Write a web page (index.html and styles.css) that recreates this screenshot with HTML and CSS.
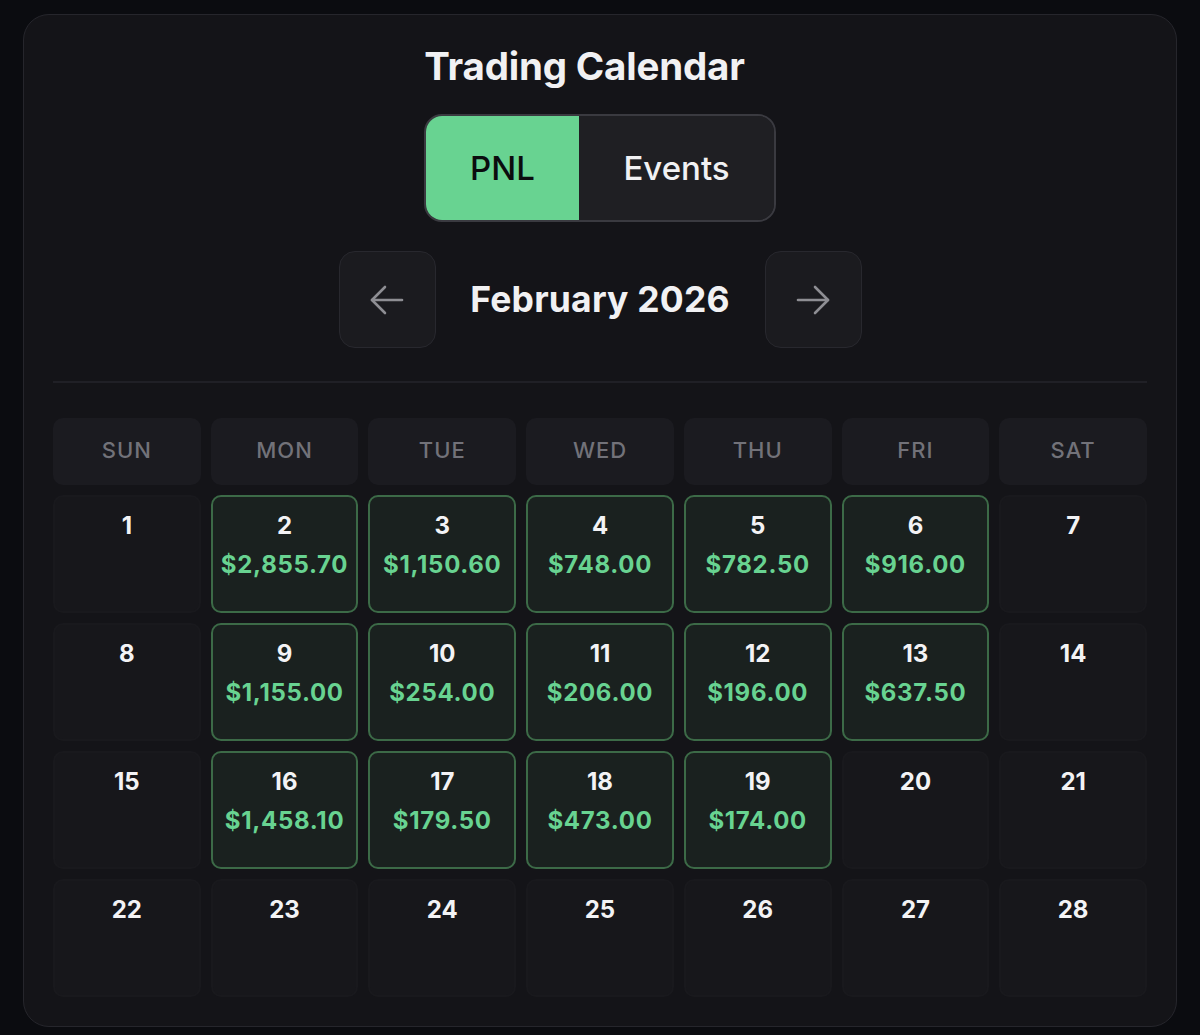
FILE: index.html
```html
<!DOCTYPE html>
<html lang="en">
<head>
<meta charset="utf-8">
<title>Trading Calendar</title>
<link rel="stylesheet" href="styles.css">
</head>
<body>
<div class="card">
  <h1 class="title">Trading Calendar</h1>
  <div class="toggle">
    <button class="seg seg-pnl active">PNL</button>
    <button class="seg seg-events">Events</button>
  </div>
  <div class="nav">
    <button class="nav-btn" aria-label="Previous month">
      <svg width="36" height="32" viewBox="0 0 36 32" fill="none" stroke="currentColor" stroke-width="2.6" stroke-linecap="round" stroke-linejoin="round"><path d="M33 16H3"/><path d="M16 3L3 16l13 13"/></svg>
    </button>
    <div class="month">February 2026</div>
    <button class="nav-btn" aria-label="Next month">
      <svg width="36" height="32" viewBox="0 0 36 32" fill="none" stroke="currentColor" stroke-width="2.6" stroke-linecap="round" stroke-linejoin="round"><path d="M3 16h30"/><path d="M20 3l13 13-13 13"/></svg>
    </button>
  </div>
  <div class="divider"></div>
  <div class="grid">
    <div class="head">SUN</div>
    <div class="head">MON</div>
    <div class="head">TUE</div>
    <div class="head">WED</div>
    <div class="head">THU</div>
    <div class="head">FRI</div>
    <div class="head">SAT</div>

    <div class="day"><span class="num">1</span></div>
    <div class="day win"><span class="num">2</span><span class="pnl">$2,855.70</span></div>
    <div class="day win"><span class="num">3</span><span class="pnl">$1,150.60</span></div>
    <div class="day win"><span class="num">4</span><span class="pnl">$748.00</span></div>
    <div class="day win"><span class="num">5</span><span class="pnl">$782.50</span></div>
    <div class="day win"><span class="num">6</span><span class="pnl">$916.00</span></div>
    <div class="day"><span class="num">7</span></div>

    <div class="day"><span class="num">8</span></div>
    <div class="day win"><span class="num">9</span><span class="pnl">$1,155.00</span></div>
    <div class="day win"><span class="num">10</span><span class="pnl">$254.00</span></div>
    <div class="day win"><span class="num">11</span><span class="pnl">$206.00</span></div>
    <div class="day win"><span class="num">12</span><span class="pnl">$196.00</span></div>
    <div class="day win"><span class="num">13</span><span class="pnl">$637.50</span></div>
    <div class="day"><span class="num">14</span></div>

    <div class="day"><span class="num">15</span></div>
    <div class="day win"><span class="num">16</span><span class="pnl">$1,458.10</span></div>
    <div class="day win"><span class="num">17</span><span class="pnl">$179.50</span></div>
    <div class="day win"><span class="num">18</span><span class="pnl">$473.00</span></div>
    <div class="day win"><span class="num">19</span><span class="pnl">$174.00</span></div>
    <div class="day"><span class="num">20</span></div>
    <div class="day"><span class="num">21</span></div>

    <div class="day"><span class="num">22</span></div>
    <div class="day"><span class="num">23</span></div>
    <div class="day"><span class="num">24</span></div>
    <div class="day"><span class="num">25</span></div>
    <div class="day"><span class="num">26</span></div>
    <div class="day"><span class="num">27</span></div>
    <div class="day"><span class="num">28</span></div>
  </div>
</div>
</body>
</html>
```

FILE: styles.css
```css
* { box-sizing: border-box; }
html, body {
  margin: 0;
  background: #0b0c10;
}
body {
  padding: 14px 23px 8px 23px;
  font-family: Inter, "Noto Sans", "Liberation Sans", sans-serif;
  color: #f1f1f3;
}
.card {
  width: 1154px;
  height: 1013px;
  background: #141418;
  border: 1px solid #26262c;
  border-radius: 26px;
  padding: 28px 29px 29px;
  display: flex;
  flex-direction: column;
  align-items: center;
}
.title {
  margin: 0 31px 0 0;
  font-size: 38.5px;
  font-weight: 700;
  line-height: 46px;
  letter-spacing: -0.2px;
  color: #f1f1f3;
}
.toggle {
  margin-top: 25px;
  display: flex;
  flex: 0 0 108px;
  height: 108px;
  border: 2px solid #3a3a40;
  border-radius: 18px;
  overflow: hidden;
  background: #1f1f23;
}
.seg {
  border: 0;
  margin: 0;
  padding: 0;
  font-family: inherit;
  font-size: 33px;
  font-weight: 500;
  display: flex;
  align-items: center;
  justify-content: center;
}
.seg-pnl {
  width: 153px;
  background: #68d391;
  color: #0b0c0e;
}
.seg-events {
  width: 195px;
  background: #1f1f23;
  color: #f1f1f3;
}
.nav {
  margin-top: 29px;
  display: flex;
  align-items: center;
  gap: 34px;
}
.nav-btn {
  width: 97px;
  height: 97px;
  border-radius: 16px;
  background: #1b1b1f;
  border: 1px solid #28282e;
  color: #8e8e93;
  display: flex;
  align-items: center;
  justify-content: center;
  padding: 0;
}
.month {
  font-size: 35.5px;
  font-weight: 700;
  color: #f1f1f3;
  width: 261px;
  text-align: center;
  letter-spacing: 0.2px;
}
.divider {
  align-self: stretch;
  flex: 0 0 2px;
  height: 2px;
  background: #202026;
  margin-top: 33px;
}
.grid {
  align-self: stretch;
  margin-top: 35px;
  display: grid;
  grid-template-columns: repeat(7, 1fr);
  grid-template-rows: 67px repeat(4, 118px);
  gap: 10px 10px;
}
.head {
  background: #1b1b20;
  border-radius: 10px;
  display: flex;
  align-items: center;
  justify-content: center;
  padding-bottom: 4px;
  font-size: 22px;
  font-weight: 500;
  letter-spacing: 1px;
  color: #727279;
}
.day {
  background: #17171b;
  border: 2px solid #19191d;
  border-radius: 10px;
  display: flex;
  flex-direction: column;
  align-items: center;
  padding-top: 14px;
  gap: 10px;
}
.day.win {
  background: #1a211f;
  border-color: #3c6a47;
}
.num {
  font-size: 24px;
  font-weight: 700;
  line-height: 29px;
  color: #f3f3f5;
}
.pnl {
  font-size: 24px;
  font-weight: 700;
  line-height: 29px;
  color: #68d391;
  letter-spacing: 0.7px;
}
```
